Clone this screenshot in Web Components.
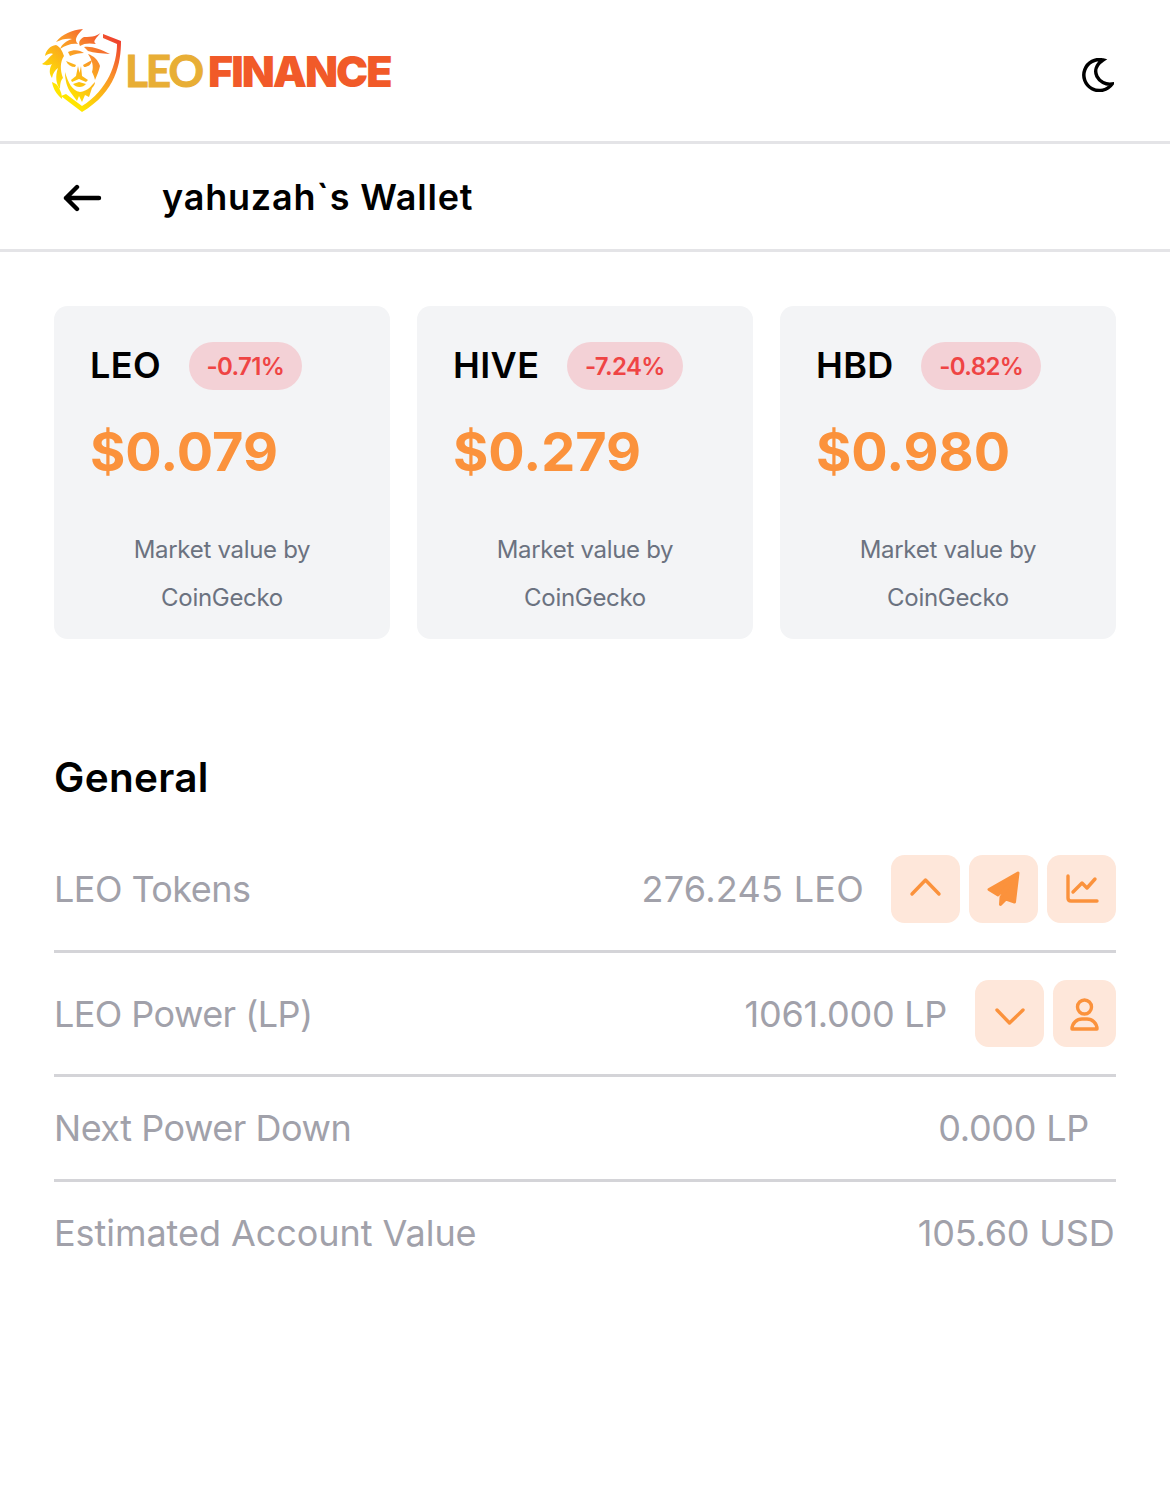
<!DOCTYPE html>
<html>
<head>
<meta charset="utf-8">
<title>Wallet</title>
<style>
    html, body { margin: 0; padding: 0; background: #fff; }
    body { font-family: Inter, "Liberation Sans", sans-serif; }
</style>
</head>
<body>
<leo-header></leo-header>
<wallet-bar>yahuzah`s Wallet</wallet-bar>
<market-list>
    <market-card symbol="LEO" change="-0.71%" price="$0.079"></market-card>
    <market-card symbol="HIVE" change="-7.24%" price="$0.279"></market-card>
    <market-card symbol="HBD" change="-0.82%" price="$0.980"></market-card>
</market-list>
<general-section>
    <info-row label="LEO Tokens" value="276.245 LEO" style="--label-ls:-.55px;--value-ls:.28px;--value-end:-1px">
        <icon-button icon="up"></icon-button>
        <icon-button icon="send"></icon-button>
        <icon-button icon="chart"></icon-button>
    </info-row>
    <info-row label="LEO Power (LP)" value="1061.000 LP" style="--label-ls:-.57px;--value-ls:-.27px">
        <icon-button icon="down" short></icon-button>
        <icon-button icon="user" short narrow></icon-button>
    </info-row>
    <info-row label="Next Power Down" value="0.000 LP" inset style="--label-ls:-.47px;--value-ls:-.25px"></info-row>
    <info-row label="Estimated Account Value" value="105.60 USD" last style="--label-ls:-.05px;--value-ls:-.2px;--value-end:1.5px"></info-row>
</general-section>

<script>
class LeoHeader extends HTMLElement {
    connectedCallback() {
        this.attachShadow({ mode: 'open' });
        this.shadowRoot.innerHTML = `
            <style>
                :host {
                    display: flex;
                    align-items: center;
                    justify-content: space-between;
                    height: 141px;
                    padding: 0 54px 0 40px;
                    border-bottom: 3px solid #e4e4e7;
                }
                .logo { display: flex; align-items: center; }
                .mark { width: 85px; height: 90px; margin-top: -1px; flex: none; }
                .word {
                    line-height: 60px;
                    padding-top: 10px;
                    white-space: nowrap;
                }
                .leo {
                    font-family: Lato, sans-serif;
                    font-size: 44px;
                    font-weight: 700;
                    color: #e8ae35;
                    letter-spacing: -2px;
                    -webkit-text-stroke: 1px #e8ae35;
                }
                .fin {
                    font-family: Inter, sans-serif;
                    font-size: 43px;
                    font-weight: 900;
                    color: #f15a29;
                    margin-left: 6px;
                    letter-spacing: -2px;
                }
                .moon { width: 32px; height: 34px; margin: 8px 2px 0 0; }
            </style>
            <div class="logo">
                <svg class="mark" viewBox="40 25 85 90">
                    <defs>
                        <linearGradient id="lion" x1="115" y1="35" x2="58" y2="100" gradientUnits="userSpaceOnUse">
                            <stop offset="0" stop-color="#ee3b2e"/>
                            <stop offset=".38" stop-color="#f98f2b"/>
                            <stop offset=".9" stop-color="#ffe600"/>
                        </linearGradient>
                    </defs>
                    <g fill="url(#lion)">
                        <path d="M103 34 L121 41 C121 63 116 92 82 112 L61 96 L66 94 L82 106 C108 90 117 63 117 44 L103 38Z"/>
                        <path d="M83 29 C72 30 62 34 56 42 C62 39 67 38 72 39 C66 41 62 44 60 49 C66 45 72 43 78 44 C74 40 76 36 83 29Z"/>
                        <path d="M102 31 C99 36 92 37 84 37 C80 39 78 42 80 46 C84 43 90 43 96 44 C92 41 96 39 102 31Z"/>
                        <path d="M84 47 C92 46 100 49 110 54 C101 53 94 53 88 51Z"/>
                        <path d="M56 45 C50 46 46 50 45 56 C48 54 50 53 53 54 C49 57 46 62 42 64 C46 66 50 65 52 64 C49 69 49 74 52 78 C53 73 55 70 58 68 C55 76 56 84 60 89 C60 83 61 80 63 78 C60 70 60 62 64 56 C62 50 60 47 56 45Z"/>
                        <path d="M52 82 C53 88 56 94 62 99 C62 94 60 88 56 84Z"/>
                        <path d="M68 52 C74 49 80 50 84 53 C80 53 74 54 70 56Z"/>
                        <path d="M88 54 C94 56 98 60 100 66 C99 71 97 75 95 80 C94 76 93 74 92 72 C94 66 92 60 88 54Z"/>
                        <path d="M66 61 L76 65 L75 67 C71 67 68 65 66 61Z"/>
                        <path d="M92 60 L83 65 L84 67 C88 67 91 65 92 60Z"/>
                        <path d="M78 66 L76 76 L71 80 L72 82 L79 79 L86 82 L88 80 L82 76 L81 66 L79.5 73Z"/>
                        <path d="M73 84 L79 82 L86 84 C83 88 76 88 73 84Z"/>
                        <path d="M65 72 C65 80 67 88 71 93 C73 96 75 98 77 101 L79 96 L82 102 L85 95 L89 97 L92 88 C94 86 95 84 95 82 C91 86 88 91 80 92 C72 91 68 82 65 72Z"/>
                    </g>
                </svg>
                <div class="word"><span class="leo">LEO</span><span class="fin">FINANCE</span></div>
            </div>
            <svg class="moon" viewBox="0 0 32 34" fill="none" stroke="#000" stroke-width="3.5" stroke-linejoin="miter">
                <path d="M21 2 A15.5 15.5 0 1 0 30 26 C17 28 6 12 21 2Z"/>
            </svg>
        `;
    }
}

class WalletBar extends HTMLElement {
    connectedCallback() {
        this.attachShadow({ mode: 'open' });
        this.shadowRoot.innerHTML = `
            <style>
                :host {
                    display: flex;
                    align-items: center;
                    height: 105px;
                    padding-left: 63px;
                    border-bottom: 3px solid #e4e4e7;
                    color: #000;
                }
                svg { width: 39px; height: 28px; margin: 2px 60px 0 0; flex: none; }
                .title { font-size: 36px; font-weight: 600; line-height: 54px; letter-spacing: .8px; }
            </style>
            <svg viewBox="0 0 39 28" fill="none" stroke="#000" stroke-width="4.4" stroke-linecap="round" stroke-linejoin="round">
                <path d="M3 14 H36 M14 3 L3 14 L14 25"/>
            </svg>
            <div class="title"><slot></slot></div>
        `;
    }
}

class MarketList extends HTMLElement {
    connectedCallback() {
        this.attachShadow({ mode: 'open' });
        this.shadowRoot.innerHTML = `
            <style>
                :host {
                    display: grid;
                    grid-template-columns: repeat(3, 336px);
                    gap: 27px;
                    padding: 54px 54px 0;
                }
            </style>
            <slot></slot>
        `;
    }
}

class MarketCard extends HTMLElement {
    connectedCallback() {
        this.attachShadow({ mode: 'open' });
        const symbol = this.getAttribute('symbol');
        const change = this.getAttribute('change');
        const price = this.getAttribute('price');
        this.shadowRoot.innerHTML = `
            <style>
                :host {
                    display: block;
                    box-sizing: border-box;
                    height: 333px;
                    padding: 36px;
                    background: #f3f4f6;
                    border-radius: 13.5px;
                }
                .top { display: flex; align-items: center; height: 48px; }
                .symbol { font-size: 36px; font-weight: 600; color: #000; line-height: 46px; height: 48px; letter-spacing: .4px; }
                .badge {
                    margin-left: 27.5px;
                    padding: 0 18px;
                    height: 48px;
                    line-height: 50px;
                    border-radius: 24px;
                    background: #f3d1d6;
                    color: #ef4444;
                    font-size: 24px;
                    font-weight: 600;
                    letter-spacing: -.65px;
                }
                .price {
                    margin-top: 26px;
                    font-size: 54px;
                    line-height: 72px;
                    font-weight: 700;
                    color: #fb923c;
                }
                .source {
                    margin-top: 38px;
                    text-align: center;
                    font-size: 24px;
                    letter-spacing: -.3px;
                    line-height: 48px;
                    color: #6b7280;
                }
            </style>
            <div class="top">
                <div class="symbol">${symbol}</div>
                <div class="badge">${change}</div>
            </div>
            <div class="price">${price}</div>
            <div class="source">Market value by<br>CoinGecko</div>
        `;
    }
}

class GeneralSection extends HTMLElement {
    connectedCallback() {
        this.attachShadow({ mode: 'open' });
        this.shadowRoot.innerHTML = `
            <style>
                :host { display: block; padding: 107px 54px 0; }
                h2 {
                    margin: 0 0 19px;
                    font-size: 40.5px;
                    line-height: 63px;
                    font-weight: 600;
                    letter-spacing: .3px;
                    color: #000;
                }
            </style>
            <h2>General</h2>
            <slot></slot>
        `;
    }
}

class InfoRow extends HTMLElement {
    connectedCallback() {
        this.attachShadow({ mode: 'open' });
        this.shadowRoot.innerHTML = `
            <style>
                :host {
                    display: flex;
                    align-items: center;
                    padding: 27px 0;
                    border-bottom: 3px solid #d4d4d8;
                    color: #a1a1aa;
                    font-size: 36px;
                    line-height: 48px;
                }
                :host([last]) { border-bottom: 0; }
                :host([inset]) .value { margin-right: 27px; }
                .label { flex: 1; letter-spacing: var(--label-ls, 0); }
                .value { letter-spacing: var(--value-ls, 0); margin-right: var(--value-end, 0); }
                .actions { display: flex; gap: 9px; }
                .actions.filled { margin-left: 28px; }
            </style>
            <div class="label">${this.getAttribute('label')}</div>
            <div class="value">${this.getAttribute('value')}</div>
            <div class="actions ${this.children.length ? 'filled' : ''}"><slot></slot></div>
        `;
    }
}

const ICONS = {
    up: '<path d="M21 39 L34.5 25 L48 39"/>',
    down: '<path d="M22 30 L34.5 43 L48 30"/>',
    send: '<path fill="#fb923c" stroke-width="3" d="M49 18 L20 34.5 L29 40 L41 29 L32 42 L31.5 49.5 L37 44 L45.5 47Z"/>',
    chart: '<path d="M21 21 V43 Q21 46 24 46 H50"/><path d="M26 37 L35 28 L40 33 L48 24"/>',
    user: '<circle cx="31.5" cy="27" r="7"/><path d="M19 49 C19 43 24 39 29 39 H34 C39 39 44 43 44 49Z"/>'
};

class IconButton extends HTMLElement {
    connectedCallback() {
        this.attachShadow({ mode: 'open' });
        const w = this.hasAttribute('narrow') ? 63 : 69;
        const h = this.hasAttribute('short') ? 67 : 68;
        this.shadowRoot.innerHTML = `
            <style>
                :host {
                    display: block;
                    width: ${w}px;
                    height: ${h}px;
                    background: #fee7da;
                    border-radius: 13.5px;
                }
                svg { display: block; }
            </style>
            <svg width="${w}" height="${h}" viewBox="0 0 ${w} ${h}" fill="none" stroke="#fb923c" stroke-width="3.4" stroke-linecap="round" stroke-linejoin="round">
                ${ICONS[this.getAttribute('icon')]}
            </svg>
        `;
    }
}

customElements.define('leo-header', LeoHeader);
customElements.define('wallet-bar', WalletBar);
customElements.define('market-list', MarketList);
customElements.define('market-card', MarketCard);
customElements.define('general-section', GeneralSection);
customElements.define('info-row', InfoRow);
customElements.define('icon-button', IconButton);
</script>
</body>
</html>
